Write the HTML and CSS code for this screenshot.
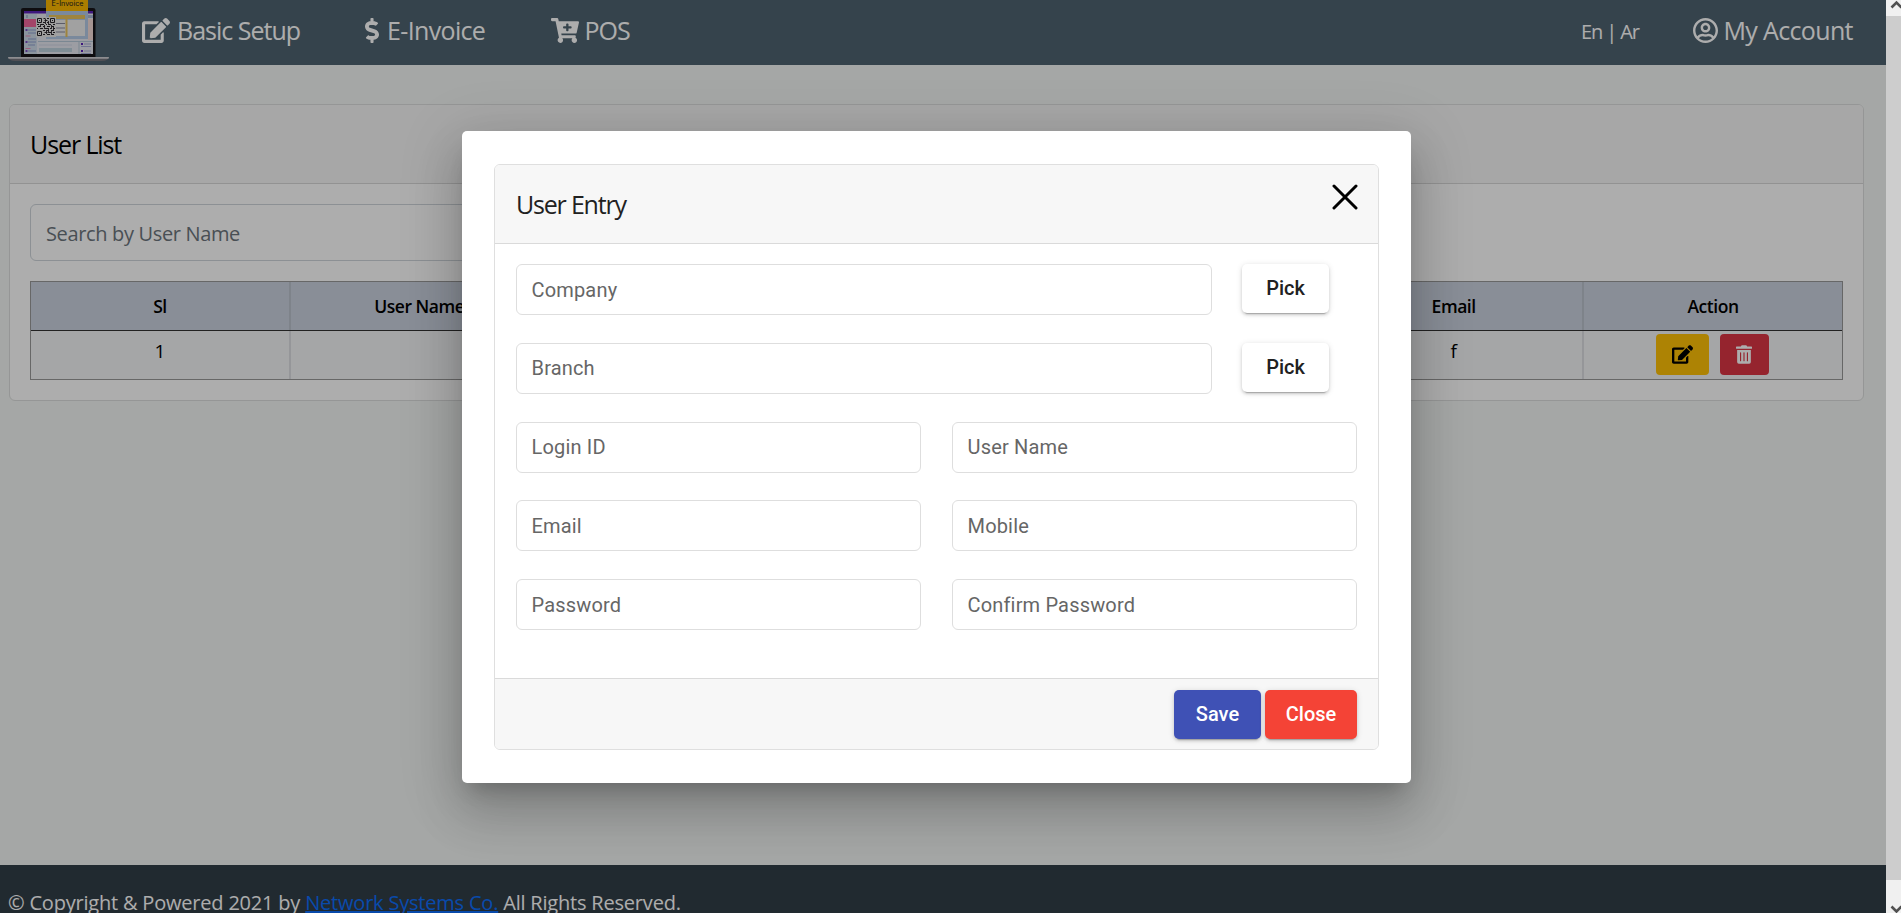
FILE: index.html
```html
<!DOCTYPE html>
<html lang="en">
<head>
<meta charset="utf-8">
<title>User List</title>
<link rel="stylesheet" href="styles.css">
</head>
<body>
<svg class="defs" width="0" height="0">
  <symbol id="edit" viewBox="0 0 576 512"><path d="M402.6 83.2l90.2 90.2c3.8 3.8 3.8 10 0 13.8L274.4 405.6l-92.8 10.3c-12.4 1.4-22.9-9.1-21.5-21.5l10.3-92.8L388.8 83.2c3.8-3.8 10-3.8 13.8 0zm162-22.900l-48.800-48.800c-15.200-15.200-39.900-15.200-55.200 0l-35.400 35.400c-3.800 3.800-3.800 10 0 13.800l90.200 90.200c3.800 3.800 10 3.800 13.800 0l35.400-35.400c15.200-15.300 15.200-40 0-55.200zM384 346.200V448H64V128h229.800c3.200 0 6.200-1.300 8.500-3.500l40-40c7.600-7.600 2.200-20.500-8.500-20.500H48C21.500 64 0 85.500 0 112v352c0 26.500 21.500 48 48 48h352c26.500 0 48-21.500 48-48V306.200c0-10.700-12.900-16-20.500-8.500l-40 40c-2.200 2.300-3.500 5.300-3.500 8.500z"/></symbol>
</svg>
<div class="window">
  <div class="page">
    <header class="nav">
      <svg class="logo" width="110" height="65" viewBox="0 0 110 65">
        <path d="M21 10q0-2 2-2h70q2.500 0 2.500 2v47H21z" fill="#161418"/>
        <path d="M24 11h69v43H24z" fill="#e6e7f0"/>
        <path d="M24 11h69v2.500H24z" fill="#5b22b8"/>
        <path d="M24 14h13v40H24z" fill="#cddbe9"/>
        <path d="M26 15h2v3h-2zM88 15h5v3h-5z" fill="#a9b8d6"/>
        <path d="M24 19h12v8H24z" fill="#f0669b"/>
        <path d="M28 30h8M28 33h8M28 39h8M28 42h8M28 45h7M28 51h8" stroke="#8f9fd0"/>
        <path d="M25.500 30h2M25.500 42h2M25.500 51h2" stroke="#5b22b8" stroke-width="1.600"/>
        <path d="M25.500 36h5M25.500 48.500h5" stroke="#e58bb5"/>
        <path d="M88 19h5v21h-5z" fill="#f5dcd8"/>
        <path d="M46 8h42v31H46z" fill="#b4cbe6"/>
        <path d="M49 15h36v4H49z" fill="#e9c35c"/>
        <path d="M49 20h36v16H49z" fill="#eee"/>
        <path d="M65.500 19h2v18h-2z" fill="#e9c35c"/>
        <path d="M56 23.500h9M56 28h9M56 32h9" stroke="#889" stroke-width="1.200"/>
        <path d="M36 17h20v20H36z" fill="#e8e8e8"/>
        <g fill="none" stroke="#29252b">
          <path d="M37.500 18.500h4v4h-4zM50.500 18.500h4v4h-4zM37.500 31.500h4v4h-4z"/>
          <path d="M39 20.500h1M52 20.500h1M39 33.500h1"/>
          <path d="M43.500 18.500h2M47 18.500h2M44.500 20.500h3M43 22.500h2M47 22.500h2M37 24.500h2M41 24.500h3M46 24.500h1M49 24.500h2M53 24.500h2M38 26.500h3M43 26.500h2M47 26.500h3M52 26.500h2M37 28.500h1M40 28.500h3M45 28.500h3M50 28.500h1M53 28.500h2M43 30.500h2M47 30.500h2M51 30.500h3M44.500 32.500h3M49 32.500h2M53 32.500h2M43 34.500h2M47 34.500h3M52 34.500h2"/>
          <path d="M45.500 19v5M48.500 21v4M40.500 24v3M44.500 25v4M51.500 25v4M48.500 28v5M51.500 31v4M46.500 30v4M53.500 27v4" stroke-width=".9"/>
        </g>
        <path d="M38 41.500h55M79 41v13" stroke="#b4c8d8"/>
        <path d="M39 45h33" stroke="#cfd6e4"/>
        <path d="M39 48h33v4H39z" fill="#bcd0dc"/>
        <path d="M81 44h2M81 51h2" stroke="#5b22b8" stroke-width="2"/>
        <path d="M84 44h7M81 46.500h10M84 51h7M81 53.500h10" stroke="#a9aed8"/>
        <path d="M8 57h101q-1 4-7 4H15q-6 0-7-4z" fill="#77767e"/>
        <path d="M8 57h101l-.5 1.800H8.500z" fill="#d0d0d4"/>
        <path d="M46 0h42v11H46z" fill="#fdb900"/>
        <text x="51.500" y="6" class="logo-text">E-Invoice</text>
      </svg>
      <nav class="menu">
        <a class="item basic"><svg class="ico" width="28" height="25"><use href="#edit"/></svg><span>Basic Setup</span></a>
        <a class="item invoice"><svg class="ico" width="14" height="25" viewBox="0 0 288 512"><path d="M209.200 233.400l-108-31.600C88.700 198.200 80 186.500 80 173.500c0-16.300 13.200-29.500 29.500-29.500h66.300c12.200 0 24.200 3.700 34.200 10.500 6.100 4.100 14.300 3.100 19.500-2l34.800-34c7.100-6.900 6.100-18.400-1.800-24.500C238 74.800 207.400 64.100 176 64V16c0-8.800-7.200-16-16-16h-32c-8.800 0-16 7.200-16 16v48h-2.500C45.800 64-5.400 118.700.5 183.600c4.200 46.100 39.400 83.600 83.800 96.600l102.500 30c12.500 3.700 21.200 15.300 21.200 28.300 0 16.300-13.200 29.500-29.500 29.500h-66.300C100 368 88 364.300 78 357.500c-6.100-4.100-14.300-3.100-19.500 2l-34.800 34c-7.100 6.900-6.100 18.400 1.800 24.500 24.500 19.200 55.100 29.900 86.500 30v48c0 8.800 7.200 16 16 16h32c8.800 0 16-7.200 16-16v-48.200c46.600-.9 90.300-28.600 105.700-72.700 21.500-61.600-14.600-124.800-72.500-141.700z"/></svg><span>E-Invoice</span></a>
        <a class="item pos"><svg class="ico" width="28" height="25" viewBox="0 0 576 512"><path d="M504.717 320H211.572l6.545 32h268.418c15.401 0 26.816 14.301 23.403 29.319l-5.517 24.276C523.112 414.668 536 433.828 536 456c0 31.202-25.519 56.444-56.824 55.994-29.823-.429-54.350-24.631-55.155-54.447-.44-16.287 6.085-31.049 16.803-41.548H231.176C241.553 426.165 248 440.326 248 456c0 31.813-26.528 57.431-58.670 55.938-28.540-1.325-51.751-24.385-53.251-52.917-1.158-22.034 10.436-41.455 28.051-51.586L93.883 64H24C10.745 64 0 53.255 0 40V24C0 10.745 10.745 0 24 0h102.529c11.401 0 21.228 8.021 23.513 19.190L159.208 64H551.990c15.401 0 26.816 14.301 23.403 29.319l-47.273 208C525.637 312.246 515.923 320 504.717 320zM408 168h-48v-40c0-8.837-7.163-16-16-16h-16c-8.837 0-16 7.163-16 16v40h-48c-8.837 0-16 7.163-16 16v16c0 8.837 7.163 16 16 16h48v40c0 8.837 7.163 16 16 16h16c8.837 0 16-7.163 16-16v-40h48c8.837 0 16-7.163 16-16v-16c0-8.837-7.163-16-16-16z"/></svg><span>POS</span></a>
      </nav>
      <div class="lang">En | Ar</div>
      <a class="item account"><svg class="ico" width="25" height="25" viewBox="0 8 496 496"><path d="M248 104c-53 0-96 43-96 96s43 96 96 96 96-43 96-96-43-96-96-96zm0 144c-26.500 0-48-21.500-48-48s21.500-48 48-48 48 21.500 48 48-21.500 48-48 48zm0-240C111 8 0 119 0 256s111 248 248 248 248-111 248-248S385 8 248 8zm0 448c-49.700 0-95.100-18.300-130.100-48.400 14.900-23 40.400-38.600 69.600-39.500 20.800 6.400 40.600 9.600 60.500 9.600s39.700-3.100 60.500-9.600c29.200 1 54.700 16.500 69.600 39.500-35 30.100-80.400 48.400-130.100 48.400zm162.700-84.100c-24.400-31.400-62.100-51.900-105.100-51.900-10.200 0-26 9.600-57.600 9.600-31.500 0-47.400-9.600-57.600-9.600-42.900 0-80.600 20.500-105.100 51.900C61.900 339.200 48 299.200 48 256c0-110.300 89.700-200 200-200s200 89.700 200 200c0 43.200-13.900 83.200-37.300 115.900z"/></svg><span>My Account</span></a>
    </header>

    <main class="main">
      <section class="card">
        <h1 class="card-head">User List</h1>
        <div class="card-body">
          <div class="search">Search by User Name</div>
          <div class="table">
            <div class="row head"><div>Sl</div><div>User Name</div><div></div><div></div><div></div><div>Email</div><div>Action</div></div>
            <div class="row"><div>1</div><div></div><div></div><div></div><div></div><div>f</div>
              <div class="actions">
                <button class="btn-edit"><svg width="21" height="19"><use href="#edit"/></svg></button>
                <button class="btn-del"><svg width="16" height="19" viewBox="0 0 448 512"><path fill="#fff" d="M32 464a48 48 0 0 0 48 48h288a48 48 0 0 0 48-48V128H32zm272-256a16 16 0 0 1 32 0v224a16 16 0 0 1-32 0zm-96 0a16 16 0 0 1 32 0v224a16 16 0 0 1-32 0zm-96 0a16 16 0 0 1 32 0v224a16 16 0 0 1-32 0zM432 32H312l-9.400-18.700A24 24 0 0 0 281.100 0H166.800a23.720 23.720 0 0 0-21.400 13.300L136 32H16A16 16 0 0 0 0 48v32a16 16 0 0 0 16 16h416a16 16 0 0 0 16-16V48a16 16 0 0 0-16-16z"/></svg></button>
              </div>
            </div>
          </div>
        </div>
      </section>
    </main>

    <footer class="footer">© Copyright &amp; Powered 2021 by <a class="link">Network Systems Co.</a> All Rights Reserved.</footer>

    <div class="overlay">
      <div class="dialog">
        <div class="entry">
          <div class="entry-head">
            <h2>User Entry</h2>
            <svg class="close-x" width="26" height="26" viewBox="0 0 26 26"><path d="M2 2l22 22M24 2L2 24" stroke="#000" stroke-width="3" stroke-linecap="round"/></svg>
          </div>
          <div class="entry-body">
            <div class="line pick"><div class="field">Company</div><button class="btn">Pick</button></div>
            <div class="line pick"><div class="field">Branch</div><button class="btn">Pick</button></div>
            <div class="line"><div class="field">Login ID</div><div class="field">User Name</div></div>
            <div class="line"><div class="field">Email</div><div class="field">Mobile</div></div>
            <div class="line"><div class="field">Password</div><div class="field">Confirm Password</div></div>
          </div>
          <div class="entry-foot"><button class="btn save">Save</button><button class="btn danger">Close</button></div>
        </div>
      </div>
    </div>
  </div>
  <div class="scrollbar">
    <div class="sb-up"><svg width="15" height="16"><path d="M5.500 7.500l5-5 5 5" fill="none" stroke="#505050" stroke-width="2.600"/></svg></div>
    <div class="sb-down"><svg width="15" height="33"><path d="M5.500 26.500l5 5 5-5" fill="none" stroke="#505050" stroke-width="2.600"/></svg></div>
  </div>
</div>
</body>
</html>
```
FILE: styles.css
```css
* { box-sizing: border-box; }
body { margin: 0; font-family: "Open Sans", "Noto Sans", sans-serif; color: #000; }
.defs { position: absolute; }
.window { display: flex; height: 913px; overflow: hidden; }
.page { position: relative; width: 1886px; display: flex; flex-direction: column; background: #f3f6f5; overflow: hidden; }

.nav { height: 65px; flex: none; background: #4f6370; display: flex; align-items: flex-start; color: #fff; }
.logo { flex: none; }
.logo-text { font-family: Inter, sans-serif; font-size: 7.200px; fill: #222; }
.menu { display: flex; }
.item { display: flex; align-items: flex-start; padding-top: 13px; font-size: 25px; line-height: 34px; letter-spacing: -0.65px; white-space: nowrap; }
.ico { fill: #fff; flex: none; margin-top: 5px; }
.basic { width: 223px; padding-left: 32px; gap: 7px; letter-spacing: -1px; }
.invoice { width: 186px; padding-left: 32px; gap: 8px; letter-spacing: -0.650px; }
.pos { padding-left: 31.500px; gap: 6px; letter-spacing: -1px; }
.lang { margin-left: auto; width: 112px; padding-top: 18px; font-size: 20px; line-height: 28px; letter-spacing: -1.100px; }
.account { width: 193px; gap: 5.500px; }

.main { flex: 1; padding: 39px 22px 0 9px; }
.card { height: 297px; border: 1px solid #dcdedd; border-radius: 6px; background: #fff; overflow: hidden; }
.card-head { margin: 0; height: 79px; padding: 22px 20px; background: #f7f7f7; border-bottom: 1px solid #d8d8d8; font-size: 25px; font-weight: 400; line-height: 34px; letter-spacing: -1.100px; }
.card-body { padding: 20px 20px; }
.search { width: 870px; height: 57px; border: 1px solid #ced4da; border-radius: 6px; padding: 15px 15px; font-size: 20px; line-height: 28px; letter-spacing: -0.35px; color: #6c757d; }
.table { margin-top: 20px; border: 1px solid #999; background: #f3f5f7; }
.row { display: grid; grid-template-columns: 260px repeat(5, 258.600px) 1fr; height: 48px; text-align: center; font-size: 19px; line-height: 27px; }
.row > div { padding-top: 7px; border-right: 2px solid #dcdee2; }
.row > div:last-child { border-right: 0; }
.head { height: 49px; background: #cbd2df; border-bottom: 1px solid #333; font-size: 17.500px; font-weight: 600; letter-spacing: -0.450px; }
.head > div { padding-top: 11px; border-right-color: #bac2cc; }
.row > .actions { display: flex; justify-content: center; gap: 11px; padding: 3px 1px 0 0; }
.actions button { height: 41px; border: 0; border-radius: 4px; padding: 0; display: flex; align-items: center; justify-content: center; }
.btn-edit { width: 53px; background: #ffc107; }
.btn-del { width: 49px; background: #dc3545; }

.footer { height: 48px; flex: none; padding: 28px 8px 0; background: #323e47; color: #fff; font-size: 20px; line-height: 20px; letter-spacing: -0.200px; white-space: nowrap; }
.link { color: #0d6efd; text-decoration: underline; }

.overlay { position: absolute; inset: 0; background: rgba(0, 0, 0, .32); padding: 131px 0 0 462px; }
.dialog { width: 949px; height: 652px; padding: 33px 32px; border-radius: 5px; background: #fff; box-shadow: 0 14px 19px -9px rgba(0,0,0,.2), 0 30px 48px 4px rgba(0,0,0,.14), 0 11px 58px 10px rgba(0,0,0,.12); }
.entry { height: 586px; border: 1px solid #dfdfdf; border-radius: 6px; display: flex; flex-direction: column; overflow: hidden; }
.entry-head { height: 79px; flex: none; background: #f7f7f7; border-bottom: 1px solid #dadada; display: flex; justify-content: space-between; padding: 20px 20px 0 21px; }
.entry-head h2 { margin: 2px 0 0; font-size: 25px; line-height: 34px; font-weight: 400; letter-spacing: -1.200px; color: #212121; }
.close-x { margin-top: -1px; }
.entry-body { flex: 1; padding: 20px 21px; display: flex; flex-direction: column; gap: 28.500px; font-family: Roboto, sans-serif; }
.line { display: grid; grid-template-columns: 1fr 1fr; gap: 31px; height: 50.250px; }
.pick { grid-template-columns: 696px 87px; gap: 30px; }
.field { border: 1px solid #dedede; border-radius: 6px; padding: 11.600px 14.500px; font-size: 20px; line-height: 26px; letter-spacing: 0.170px; color: #666; }
.btn { width: 87px; height: 49px; padding: 0; border: 0; border-radius: 5px; background: #fff; color: #212121; font: 500 20px/49px Roboto, sans-serif; box-shadow: 0 4px 1px -3px rgba(0,0,0,.2), 0 2px 3px rgba(0,0,0,.14), 0 1px 6px rgba(0,0,0,.12); }
.entry-foot { height: 71px; flex: none; background: #f7f7f7; border-top: 1px solid #dadada; display: flex; justify-content: flex-end; gap: 4px; padding: 11px 21px; }
.save { background: #3f51b5; color: #fff; }
.danger { width: 92px; background: #f44336; color: #fff; }

.scrollbar { width: 15px; background: #cdcdcd; display: flex; flex-direction: column; justify-content: space-between; }
.sb-up { height: 16px; background: #f0f0f0; }
.sb-down { height: 33px; background: #f0f0f0; }
.scrollbar svg { display: block; }
```
